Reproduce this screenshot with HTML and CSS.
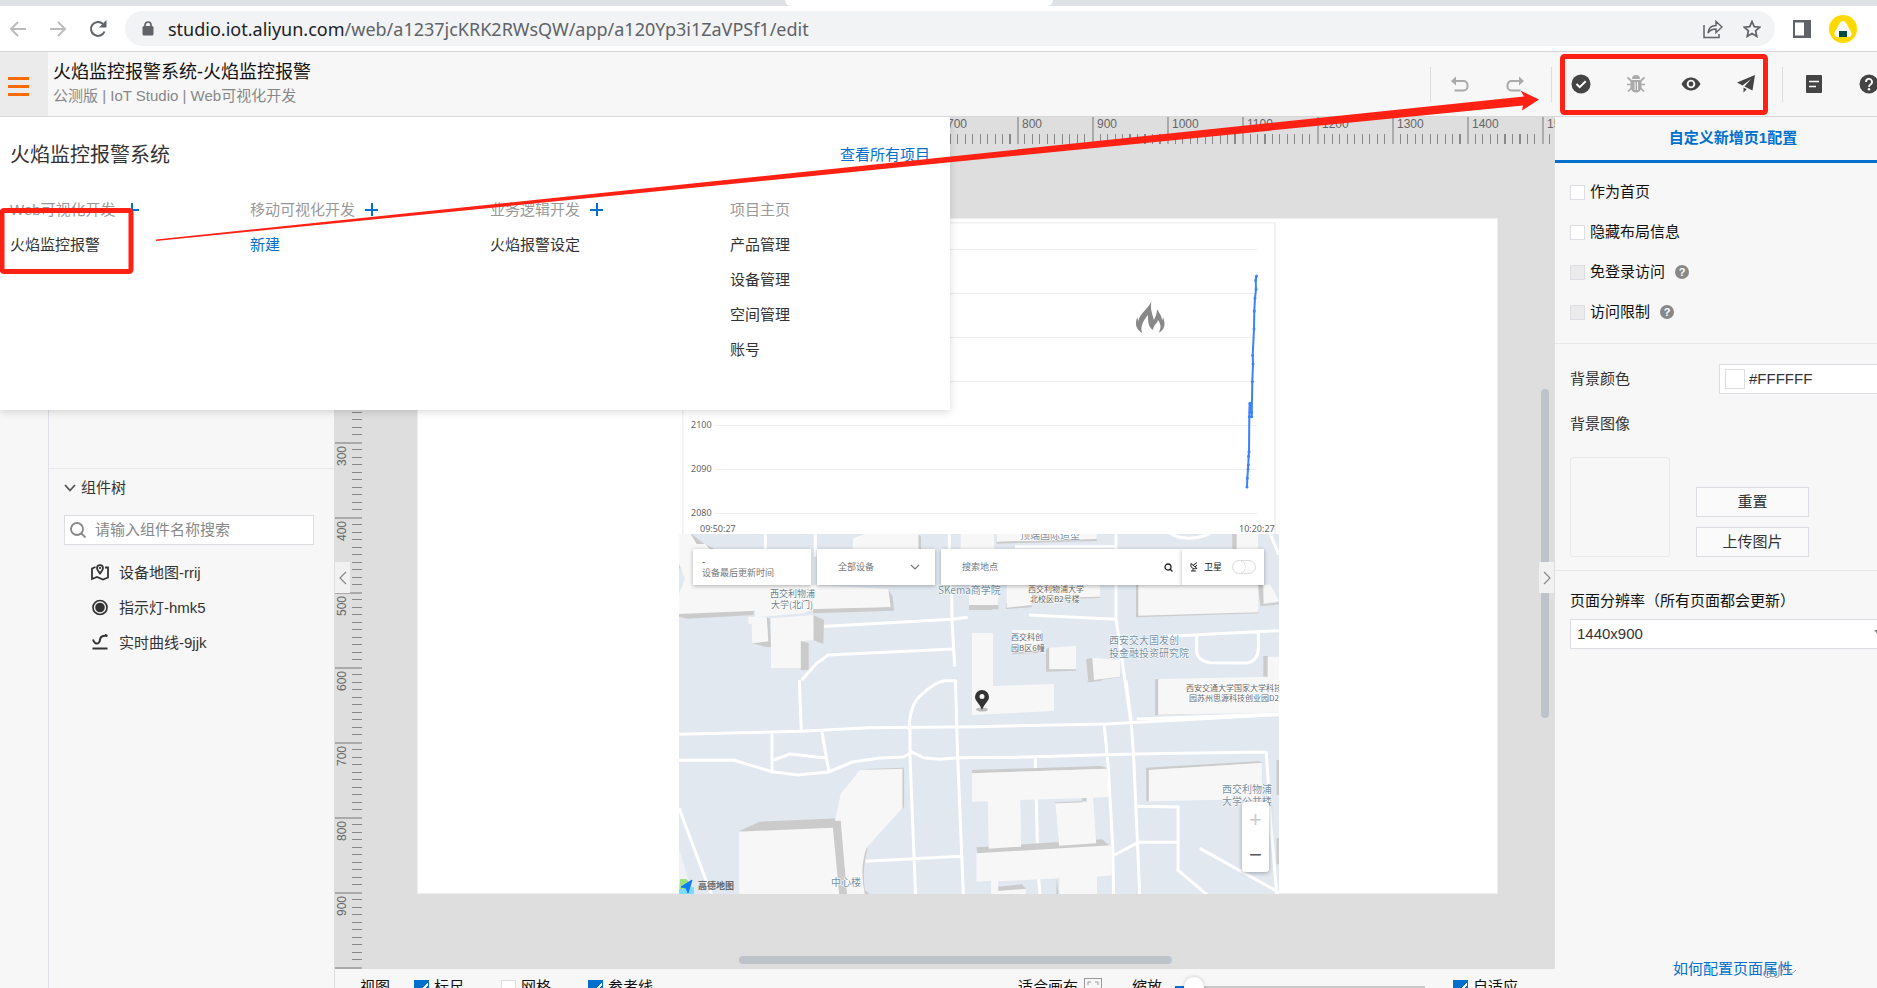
FILE: index.html
```
<!DOCTYPE html>
<html lang="zh-CN">
<head>
<meta charset="utf-8">
<title>火焰监控报警系统-火焰监控报警</title>
<link rel="stylesheet" href="styles.css">
</head>
<body>
<div class="tabstrip"><span class="tab-edge"></span></div>
<div class="browser">
  <button class="nav" aria-label="后退"><svg width="18" height="18" viewBox="0 0 18 18"><path d="M17 9H2M9 2 2 9l7 7" fill="none" stroke="#babcbe" stroke-width="2"/></svg></button>
  <button class="nav" aria-label="前进"><svg width="18" height="18" viewBox="0 0 18 18"><path d="M1 9h15M9 2l7 7-7 7" fill="none" stroke="#babcbe" stroke-width="2"/></svg></button>
  <button class="nav" aria-label="刷新"><svg width="18" height="18" viewBox="0 0 18 18"><path d="M15.500 11.500A7 7 0 1 1 14 4" fill="none" stroke="#5f6368" stroke-width="2"/><path d="M17.500 0v7.500H10z" fill="#5f6368"/></svg></button>
  <div class="address">
    <svg width="12" height="15" viewBox="0 0 12 15"><rect x="0.500" y="5" width="11" height="9.500" rx="1.500" fill="#5f6368"/><path d="M3 6V4a3 3 0 0 1 6 0v2" fill="none" stroke="#5f6368" stroke-width="1.700"/></svg>
    <div class="url" role="textbox" aria-label="地址">studio.iot.aliyun.com<span>/web/a1237jcKRK2RWsQW/app/a120Yp3i1ZaVPSf1/edit</span></div>
    <button class="tool" aria-label="分享"><svg width="20" height="20" viewBox="0 0 20 20" fill="none" stroke="#5f6368" stroke-width="1.500"><path d="M1 6v12.500h15V15"/><path d="M5 14c.5-5 3-7.500 8-7.500V2.500L19 8l-6 5.500V10c-4 0-6 1-8 4z"/></svg></button>
    <button class="tool" aria-label="收藏"><svg width="18" height="18" viewBox="0 0 18 18"><path d="M9 1.500l2.200 5.200 5.600.5-4.200 3.700 1.200 5.500L9 13.500l-4.800 2.900 1.200-5.500L1.200 7.200l5.600-.5z" fill="none" stroke="#5f6368" stroke-width="1.700"/></svg></button>
  </div>
  <button class="side" aria-label="侧边栏"><svg width="18" height="18" viewBox="0 0 18 18"><rect width="18" height="18" fill="#5f6368"/><rect x="2" y="2.500" width="9" height="13" fill="#fff"/></svg></button>
  <button class="avatar" aria-label="账户"><svg width="28" height="28" viewBox="0 0 28 28"><circle cx="14" cy="14" r="14" fill="#ffd900"/><path d="M14 6c2.500 0 3.600 2.600 5 5.500 1.600 3.300 3.500 5.200 3.500 7.500 0 2-1.500 3-3 3h-11c-1.500 0-3-1-3-3 0-2.300 1.900-4.200 3.500-7.500C10.400 8.600 11.500 6 14 6z" fill="#fff"/><rect x="10" y="16" width="8" height="6" fill="#004d40"/></svg></button>
</div>

<header class="header">
  <button class="burger" aria-label="菜单"><i></i><i></i><i></i></button>
  <div class="titles"><h1>火焰监控报警系统-火焰监控报警</h1><p>公测版 | IoT Studio | Web可视化开发</p></div>
  <div class="actions">
    <i class="rule"></i>
    <div class="group">
      <button aria-label="撤销"><svg width="18" height="17" viewBox="0 0 18 17"><path d="M4 5h8.500a4 4 0 0 1 4 4v1.500a4 4 0 0 1-4 4H3.500" fill="none" stroke="#aaa" stroke-width="2"/><path d="M0 5l5-4.500v9z" fill="#aaa"/></svg></button>
      <button aria-label="重做"><svg width="18" height="17" viewBox="0 0 18 17"><path d="M14 5H5.500a4 4 0 0 0-4 4v1.500a4 4 0 0 0 4 4h9" fill="none" stroke="#aaa" stroke-width="2"/><path d="M18 5l-5-4.500v9z" fill="#aaa"/></svg></button>
    </div>
    <i class="rule"></i>
    <div class="group">
      <button aria-label="保存"><svg width="20" height="20" viewBox="0 0 20 20"><circle cx="10" cy="10" r="9.500" fill="#444"/><path d="M5.500 10l3.200 3.200 6-6" fill="none" stroke="#fff" stroke-width="2"/></svg></button>
      <button aria-label="调试"><svg width="20" height="20" viewBox="0 0 20 20" fill="#aaa"><path d="M6 5a4 4 0 0 1 8 0z"/><path d="M4.500 6h11v7a5.500 5.500 0 0 1-11 0z"/><path d="M1.500 3.500L5.500 7M18.500 3.500L14.500 7M1 10.500h4M19 10.500h-4M2 17.500L5.500 14M18 17.500L14.500 14" stroke="#aaa" stroke-width="1.700"/><path d="M9 8v8M11.500 8v8" stroke="#f7f7f7"/></svg></button>
      <button aria-label="预览"><svg width="20" height="20" viewBox="0 0 20 20"><path d="M.5 10C3 5.500 6.500 3.500 10 3.500s7 2 9.500 6.500c-2.500 4.500-6 6.500-9.500 6.500S3 14.500.5 10z" fill="#444"/><circle cx="10" cy="10" r="4.300" fill="#f7f7f7"/><circle cx="10" cy="10" r="2.400" fill="#444"/></svg></button>
      <button aria-label="发布"><svg width="20" height="20" viewBox="0 0 20 20" fill="#444"><path d="M19 1L1 8.500l5.500 3L15 5l-6.500 7.500 8 4z"/><path d="M7.500 13.500v5l3.200-3.300z"/></svg></button>
    </div>
    <i class="rule"></i>
    <div class="group">
      <button aria-label="文档"><svg width="16" height="18" viewBox="0 0 16 18"><rect width="16" height="18" rx="1" fill="#444"/><path d="M3 6.500h10M3 11.500h7" stroke="#fff" stroke-width="1.700"/></svg></button>
      <button aria-label="帮助"><svg width="20" height="20" viewBox="0 0 20 20"><circle cx="10" cy="10" r="9.500" fill="#444"/><path d="M7 8a3 3 0 1 1 4.500 2.500C10.300 11.200 10 11.700 10 13" fill="none" stroke="#fff" stroke-width="1.800"/><circle cx="10" cy="15.300" r="1.200" fill="#fff"/></svg></button>
    </div>
  </div>
</header>

<main class="main">
  <div class="rail"></div>
  <aside class="left">
    <div class="library"></div>
    <section class="tree">
      <h2><svg width="12" height="8" viewBox="0 0 12 8"><path d="M1 1l5 5.500L11 1" fill="none" stroke="#555" stroke-width="1.800"/></svg>组件树</h2>
      <label class="search"><svg width="16" height="16" viewBox="0 0 16 16"><circle cx="7" cy="7" r="6" fill="none" stroke="#888" stroke-width="1.800"/><path d="M11 11l4.500 4.500" stroke="#888" stroke-width="1.800"/></svg><input type="text" placeholder="请输入组件名称搜索" aria-label="搜索组件"></label>
      <ul>
        <li><svg width="18" height="17" viewBox="0 0 18 17" fill="none" stroke="#333" stroke-width="1.800"><path d="M4.500 3L1 4.500V15l5-2 6 2.500 5-2V3.500h-3"/><path d="M9 9.500C7 7 6 6 6 4.200a3 3 0 0 1 6 0C12 6 11 7 9 9.500z"/><path d="M9 3v2"/></svg>设备地图-rrij</li>
        <li><svg width="18" height="17" viewBox="0 0 18 17"><circle cx="9" cy="8.500" r="7" fill="none" stroke="#333" stroke-width="1.700"/><circle cx="9" cy="8.500" r="4.800" fill="#333"/></svg>指示灯-hmk5</li>
        <li><svg width="18" height="17" viewBox="0 0 18 17" fill="none" stroke="#333" stroke-width="2"><path d="M1.500 14.500h15"/><path d="M2 5.500c1 3.500 3.500 5 5.500 3.500s1-3 2-5 3-2.500 6.500-2M14 1l2.500 1"/></svg>实时曲线-9jjk</li>
      </ul>
    </section>
  </aside>

  <section class="work">
    <div class="stage">
      <div class="ruler-x"><b>-100</b><b>0</b><b>100</b><b>200</b><b>300</b><b>400</b><b>500</b><b>600</b><b>700</b><b>800</b><b>900</b><b>1000</b><b>1100</b><b>1200</b><b>1300</b><b>1400</b><b>1500</b></div>
      <div class="ruler-y"><b>-100</b><b>0</b><b>100</b><b>200</b><b>300</b><b>400</b><b>500</b><b>600</b><b>700</b><b>800</b><b>900</b><b></b></div>
      <div class="artboard">
        <svg class="chart" width="594" height="312" viewBox="682 222 594 312">
          <path d="M682.500 534V222.500H1275V534" fill="none" stroke="#f2f2f2" stroke-width="2"/>
          <path d="M715 249.500h542M715 293.500h542M715 337.500h542M715 381.500h542M715 425.500h542M715 469.500h542M715 513.500h542" stroke="#ededed"/>
          <g class="axis"><text x="691" y="428">2100</text><text x="691" y="472">2090</text><text x="691" y="516">2080</text><text x="700" y="532">09:50:27</text><text x="1239" y="532">10:20:27</text></g>
          <polyline class="series" points="1247,487 1247.300,478.300 1248,469.300 1248.300,465 1248.600,456.300 1249,451.700 1249.300,416.700 1249.600,403.300 1251.700,412.300 1251.700,416.700 1252.300,381.700 1253,364 1252.700,355.300 1254,328.700 1254.300,311 1255,298 1256,289.300 1255.700,280.300 1256.500,276"/>
          <path class="dots" d="M1247 487h0M1247.300 478.300h0M1248 469.300h0M1248.300 465h0M1248.600 456.300h0M1249 451.700h0M1249.300 416.700h0M1250 403.300h0M1250 412.300h0M1251.700 412.300h0M1251.700 416.700h0M1252.300 381.700h0M1253 364h0M1252.700 355.300h0M1254 328.700h0M1254.300 311h0M1255 298h0M1256 289.300h0M1255.700 280.300h0M1256.500 276h0"/>
          <path fill="#888" d="M1151.500 301c-1 5-13 14-13 20-1-2-1-3-1-4-1.500 3-1.500 5-1.500 7 0 4 3 7 6 9-1.500-6 0-11 6-18 0 6 0 12 5 15 1-6 4-6 5-10 3 4 3.500 8 .5 13 4-2 6-5 6-9 0-2-.5-4-1.500-7 0 1 0 2-1 3 0-4-3-7-5-11 0 6-2 8-3 11-2-7-4-11-2.500-19z"/>
        </svg>
        <svg class="map" width="600" height="360" viewBox="679 534 600 360">
          <rect x="679" y="534" width="600" height="360" fill="#e1e8f0"/>
          <g transform="translate(670 400) scale(.33333)">
            <g class="road"><path d="M286 400v60M436 400v70M838 400v100l7 80 1 80 8 140M430 681l416-23 47-6M395 840l45-50 35-25 375-18M42 560l20-60"/></g>
            <g class="side"><path d="M27 640l224-8v13l-200 11-24-6zM65 402l35 28 33 17-100 0zM655 568l13 22 4 42-242 8v-14l230-5zM745 402l8 8v40h-8zM430 645l32 15-2 72-30-12zM392 722l24 8v80h-24zM290 652l9 3 4 86h-15l-41-11 47-6zM897 600h70v30h-70zM27 470l24 5v36l-24-6z"/></g>
            <g class="block"><path d="M27 402h35l18 30h25l20 20h302v175l-27 13-145 12v-20l-228 10v-60l18-45-18-45zM425 555l230 12 7 54-232 6zM549 415l36-13h160v45H549zM872 402h100v45H872zM897 555h75v60h-75zM303 655l127-10v75l-38 4v80h-89zM235 650l55 2 5 72-48 6-2-58h-10z"/></g>
          </g>
          <g transform="translate(980 500) scale(.33333)">
            <g class="road"><path d="M408 100v255l44 305M147 345l261 13M105 140l303-1M570 100q55 30 120 0M560 409l337-17M650 408v50q5 25 40 30l110 1q35-5 35-45v-45M870 100l27 65M470 657l427-15"/></g>
            <g class="side"><path d="M50 110h300v13l-200 5-100 3zM0 300h55v28H0zM78 310l77-2v14l-77 5zM175 280h185v14l-185 5zM468 255h10v85l358-10v10l-368 12zM835 255h15v58l47-6v6l-55 6-9-60zM757 102h14v45h-14zM96 450l88-5v13l-88 5zM198 448l10-6v66h80v4l-90 3zM318 478l20-5 5 60 78-10v8l-96 14zM850 468h14v62h-14zM526 537h10v100l361-10v8l-371 11z"/></g>
            <g class="block"><path d="M50 102h300v15l-300 8zM0 255h55v60H0zM80 255h75v60l-75 8zM175 255h185v35l-185 4zM475 255h360v82l-360 10zM850 255h22l25 48-45 7zM770 102h64v45h-64zM96 390h88v60l-88 8zM208 443l80-6v70h-80zM337 473l83 7v50l-78 10zM863 470h40v60h-40zM535 537l362-7v105l-362 8z"/></g>
          </g>
          <path class="block" d="M972 633h21v53l61-2v27l-82 4z"/>
          <g transform="translate(670 680) scale(.3954 .33333)">
            <g class="road"><path d="M23 163l310-9 170-11 270-3 330-8 437-28M327 0l5 152M258 157v118M384 155l18 120M258 242l45-20 92 12M23 241h140l95 34 65 10 78-9 60-30 70-12 60-3 20-15 30 17 40 5 50-5 140-1 300-10 335-6M605 150q0-75 30-105 35-40 60-43h28M722 0l5 215 15 430M607 150v80l14 415M495 544l240-15M924 235l5 255M932 590l4 55M1098 135l10 120 12 250 2 145M1153 0l13 120 7 120 15 405M1124 525l60-38h103M1182 379l103 2v190l75 75M1508 214l12 230 15 200M1340 505l200 132M23 385l82 260"/></g>
            <path d="M23 505l35 140H23z" fill="#f1f2f5"/>
            <g class="side"><path d="M480 268l112-5v118l-5 6-8-115zM175 453l52-28 205-10v32l-235 10zM410 442l22-20 16 223h-22zM500 505q-15 60-7 125l20 20h-25q-12-80 5-150zM764 270l326-12 18 8-344 14zM974 367l80-4v-10h-12v25l-58 3 6 110-6 5zM775 502l318-24 20 20-335 24zM830 620l60-7 10 14-70 6zM978 597l5 48h-6zM1204 263l285-19 10 4-287 22v92l-7 2zM1228 0h7v104h-7zM1534 240h7v105h-7zM1534 475h7v78h-7zM1056 3l35-3v3l-35 4z"/></g>
            <g class="block"><path d="M480 270l108-4v118l-90 118q-20 60-5 142h-45l-16-222h-15l15-80zM175 455l237-12 16 202H175zM764 280l344-14v85l-38 2 8 137-94 7-10-127 80-3v-13l-168 6 2 140-82 6-2-142-40 1zM775 520l342-24v90l-37 4v55h-95v-50l-155 9v41h-18v-43l-37 3zM830 633l70-6v18h-70zM1211 270l286-21v108l-286 7zM1235 0h310v98l-310 6z"/></g>
          </g>
          <ellipse cx="982" cy="709.500" rx="6" ry="2" fill="#bbb"/>
          <path fill="#333" fill-rule="evenodd" d="M982 710c-2-6-7-9-7-13a7 7 0 0 1 14 0c0 4-5 7-7 13zM982 694a2.500 2.500 0 1 0 0 5 2.500 2.500 0 0 0 0-5z"/>
          <g class="place">
            <text x="770" y="597">西交利物浦</text><text x="771" y="608">大学(北门)</text>
            <text class="big" x="1020" y="539">顶端国际造型</text>
            <text class="big" x="938" y="594">SKema商学院</text>
            <text class="small" x="1028" y="592">西交利物浦大学</text><text class="small" x="1030" y="602">北校区B2号楼</text>
            <text class="small" x="1011" y="640">西交科创</text><text class="small" x="1011" y="651">园B区6幢</text>
            <text class="big" x="1109" y="644">西安交大国发创</text><text class="big" x="1109" y="657">投金融投资研究院</text>
            <text class="small" x="1186" y="691">西安交通大学国家大学科技</text><text class="small" x="1189" y="701">园苏州思源科技创业园D2</text>
            <text class="big" x="1222" y="793">西交利物浦</text><text class="big" x="1222" y="805">大学公共楼</text>
            <text class="big" x="831" y="886">中心楼</text>
          </g>
          <path d="M680 879h6q6 4 7 15h-14z" fill="#9be27d"/><path d="M679 890l15-3v7h-15z" fill="#7edbff"/><path d="M692 880l-11 7 5 1 2 5z" fill="#0a7cff" stroke="#0a7cff"/>
          <text class="brand" x="698" y="889">高德地图</text>
        </svg>
        <div class="mapbar">
          <div class="card updated"><span>-</span><span>设备最后更新时间</span></div>
          <button class="card devices">全部设备<svg width="10" height="6" viewBox="0 0 10 6"><path d="M1 1l4 4 4-4" fill="none" stroke="#777" stroke-width="1.200"/></svg></button>
          <div class="card finder"><input type="text" placeholder="搜索地点" aria-label="搜索地点"><svg width="9" height="9" viewBox="0 0 9 9"><circle cx="4" cy="4" r="3" fill="none" stroke="#222" stroke-width="1.300"/><path d="M6 6l2.500 2.500" stroke="#222" stroke-width="1.300"/></svg></div>
          <label class="card satellite"><svg width="8" height="10" viewBox="0 0 8 10" fill="none" stroke="#222"><path d="M1 1.500c-1 4 2 6 6 5zM3 3.500L7 .5M5 5l2-2M3 7v2M1 9h5"/></svg>卫星<input type="checkbox" class="switch"></label>
        </div>
        <div class="zoom"><button aria-label="放大" class="plus">+</button><i></i><button aria-label="缩小">−</button></div>
      </div>
      <i class="scroll-y"></i><i class="scroll-x"></i>
      <button class="fold fold-l" aria-label="收起左栏"><svg width="8" height="14" viewBox="0 0 8 14"><path d="M7 1L1 7l6 6" fill="none" stroke="#888" stroke-width="1.200"/></svg></button>
      <button class="fold fold-r" aria-label="收起右栏"><svg width="8" height="14" viewBox="0 0 8 14"><path d="M1 1l6 6-6 6" fill="none" stroke="#888" stroke-width="1.200"/></svg></button>
    </div>
    <footer class="viewbar">
      <span class="cap">视图</span>
      <label><input type="checkbox" checked>标尺</label>
      <label><input type="checkbox">网格</label>
      <label><input type="checkbox" checked>参考线</label>
      <button class="fit">适合画布<svg width="18" height="18" viewBox="0 0 18 18" fill="none" stroke="#999"><rect x=".5" y=".5" width="17" height="17"/><path d="M4 7V4h3M11 4h3v3M14 11v3h-3M7 14H4v-3"/></svg></button>
      <label class="scale">缩放<input type="range" min="0" max="100" value="4"></label>
      <label class="auto"><input type="checkbox" checked>自适应</label>
    </footer>
  </section>

  <aside class="right">
    <button class="tab">自定义新增页1配置</button>
    <div class="sect checks">
      <label><input type="checkbox">作为首页</label>
      <label><input type="checkbox">隐藏布局信息</label>
      <label><input type="checkbox" disabled>免登录访问<span class="help">?</span></label>
      <label><input type="checkbox" disabled>访问限制<span class="help">?</span></label>
    </div>
    <div class="sect back">
      <div class="row"><label for="bg">背景颜色</label><div class="color"><i></i><input id="bg" type="text" value="#FFFFFF"></div></div>
      <div class="row"><span>背景图像</span></div>
      <div class="image"><div class="thumb"></div><div class="btns"><button>重置</button><button>上传图片</button></div></div>
    </div>
    <div class="sect size">
      <label for="res">页面分辨率（所有页面都会更新）</label>
      <div class="pick"><select id="res"><option>1440x900</option></select><svg width="10" height="6" viewBox="0 0 10 6"><path d="M0 0h10L5 6z" fill="#888"/></svg></div>
    </div>
    <div class="foot"><a href="#">如何配置页面属性</a><svg class="mark" width="36" height="16" viewBox="0 0 36 16" fill="none" stroke="#8d9299"><path d="M9 9a4 4 0 1 0 0 5M12 9a3 3 0 1 0 1 5M17 5v8c0 2-2 3-4 2M19 13c2-9 7-10 8-5s3 4 7 0M22 5l6 6"/></svg></div>
  </aside>

  <nav class="menu">
    <div class="menu-head"><h2>火焰监控报警系统</h2><a href="#">查看所有项目</a></div>
    <div class="cols">
      <div><h3>Web可视化开发<button aria-label="新建Web应用" class="add"></button></h3><a href="#">火焰监控报警</a></div>
      <div><h3>移动可视化开发<button aria-label="新建移动应用" class="add"></button></h3><a href="#" class="new">新建</a></div>
      <div><h3>业务逻辑开发<button aria-label="新建业务逻辑" class="add"></button></h3><a href="#">火焰报警设定</a></div>
      <div><h3>项目主页</h3><a href="#">产品管理</a><a href="#">设备管理</a><a href="#">空间管理</a><a href="#">账号</a></div>
    </div>
  </nav>
</main>

<svg class="notes" width="1877" height="300" viewBox="0 0 1877 300">
  <rect x="2" y="210.500" width="129" height="61" rx="2" fill="none" stroke="#ff2113" stroke-width="5"/>
  <rect x="1562.500" y="56.500" width="203" height="56" rx="2" fill="none" stroke="#ff2113" stroke-width="5"/>
  <path d="M156 239.500L1524 96.500 1520.500 90.500 1539 99.500 1522 110.500 1523 105.500 156 241z" fill="#ff2113"/>
</svg>
</body>
</html>
```

FILE: styles.css
```
* { box-sizing: border-box; }
body {
  margin: 0;
  height: 100vh;
  display: flex;
  flex-direction: column;
  overflow: hidden;
  position: relative;
  font: 15px/20px "Liberation Sans", "Noto Sans CJK SC", sans-serif;
  color: #333;
  background: #f7f7f7;
}
button, input, select { font: inherit; color: inherit; }
button { border: 0; padding: 0; margin: 0; background: none; display: flex; align-items: center; justify-content: center; }
h1, h2, h3, p, ul { margin: 0; padding: 0; font-weight: 400; list-style: none; }
a { color: #0070cc; text-decoration: none; }
svg { flex: none; display: block; }

/* browser chrome */
.tabstrip { height: 6px; background: #dee1e6; flex: none; display: flex; padding-left: 785px; }
.tab-edge { width: 268px; background: #fff; border-radius: 0 0 6px 6px; }
.browser { height: 46px; flex: none; background: #fff; border-bottom: 1px solid #d5d5d5; display: flex; align-items: center; padding: 0 20px 0 0; }
.nav { width: 35px; height: 36px; flex: none; }
.nav:nth-child(2) { width: 45px; }
.address { flex: 1; min-width: 0; height: 35px; margin-left: 10px; border-radius: 18px; background: #f1f3f4; display: flex; align-items: center; padding: 0 14px 0 17px; }
.url { flex: 1; min-width: 0; margin-left: 14px; font: 18px/26px "Noto Sans", sans-serif; color: #202124; white-space: nowrap; overflow: hidden; }
.url span { color: #5f6368; }
.tool { width: 40px; height: 30px; }
.tool:last-child { width: 18px; margin-left: 10px; }
.side { margin-left: 18px; }
.avatar { margin-left: 18px; }

/* app header */
.header { height: 65px; flex: none; display: flex; border-bottom: 1px solid #d8d8d8; background: #f7f7f7; overflow: hidden; }
.burger { width: 48px; flex: none; background: #ebebeb; flex-direction: column; gap: 5px; padding: 4px 11px 0 0; }
.burger i { width: 21px; height: 3px; background: #ff6a00; }
.titles { padding: 7px 0 0 5px; flex: 1; white-space: nowrap; }
.titles h1 { font-size: 18px; line-height: 26px; color: #111; }
.titles p { line-height: 22px; color: #888; }
.actions { display: flex; align-items: center; gap: 3px; margin-right: -19px; }
.actions .rule { width: 1px; height: 35px; background: #ddd; }
.actions .rule + .group { margin: 0 6px 0 -2px; }
.actions .group:last-child { margin: 0; }
.group { display: flex; }
.group button { width: 55px; height: 36px; }

/* frame */
.main { flex: 1; min-height: 0; display: flex; overflow: hidden; position: relative; }
.rail { width: 49px; flex: none; border-right: 1px solid #dde1e6; }
.left { width: 285px; flex: none; display: flex; flex-direction: column; }
.library { height: 352px; border-bottom: 1px solid #e6e8eb; }
.tree { padding: 8px 20px 0 15px; }
.tree h2 { display: flex; align-items: center; gap: 5px; font-size: 15px; line-height: 22px; }
.search { display: flex; align-items: center; gap: 9px; height: 30px; margin: 16px 0 10px; padding: 0 5px; border: 1px solid #dcdee3; background: #fff; }
.search input { border: 0; outline: 0; padding: 0; flex: 1; min-width: 0; background: none; }
.search input::placeholder { color: #888; opacity: 1; }
.tree li { display: flex; align-items: center; gap: 10px; height: 35px; padding-left: 27px; }

/* canvas */
.work { flex: 1; min-width: 0; display: flex; flex-direction: column; }
.stage { flex: 1; min-height: 0; position: relative; overflow: hidden; background: #dedede; }
.ruler-x, .ruler-y { position: absolute; top: 0; left: 0; display: flex; font-size: 12px; line-height: 15px; color: #666; }
.ruler-x { padding-left: 8px; height: 28px; }
.ruler-x b { flex: none; width: 75px; height: 27px; padding-left: 3px; font-weight: 400; border-left: 2px solid #aaa; background: repeating-linear-gradient(90deg, #888 0 1px, transparent 1px 10%) border-box 0 17px no-repeat; }
.ruler-y { flex-direction: column; width: 28px; padding-top: 25px; }
.ruler-y b { flex: none; height: 75px; width: 27px; margin-left: 1px; padding-bottom: 2px; font-weight: 400; writing-mode: vertical-rl; transform: rotate(180deg); text-align: right; border-bottom: 2px solid #aaa; background: linear-gradient(#dedede, #dedede) 10px 0 / 17px 73px no-repeat, repeating-linear-gradient(0deg, #888 0 1px, transparent 1px 10%) border-box; }
.artboard { position: absolute; left: 83px; top: 101px; width: 1081px; height: 676px; background: #fff; border: 1px solid #eee; }
.chart { position: absolute; left: 264px; top: 3px; }
.map { position: absolute; left: 261px; top: 315px; }
.axis text { font: 9px "Noto Sans", sans-serif; fill: #666; }
.series { fill: none; stroke: #3b82ff; stroke-width: 2; stroke-linejoin: round; }
.dots { stroke: #3b82ff; stroke-width: 3; stroke-linecap: round; }
.road path { fill: none; stroke: #fff; stroke-width: 3; vector-effect: non-scaling-stroke; }
.side path { fill: #cbcbcb; }
.block path, path.block { fill: #f7f7f7; }
.place text { font: 9px "Noto Sans CJK SC", sans-serif; fill: #6b7f8e; paint-order: stroke; stroke: #fff; stroke-width: 1; }
.place .big { font-size: 10px; fill: #7890a3; }
.place .small { font-size: 8px; fill: #666; }
.brand { font: bold 9px "Noto Sans CJK SC", sans-serif; fill: #666; }
.mapbar { position: absolute; left: 275px; top: 330px; width: 571px; display: flex; font: 9px/12px "Noto Sans CJK SC", sans-serif; color: #777; }
.card { height: 36px; background: #fff; box-shadow: 0 1px 4px rgba(0, 0, 0, .3); display: flex; align-items: center; }
.updated { width: 118px; margin-right: 6px; padding: 2px 9px 0; flex-direction: column; align-items: flex-start; justify-content: center; }
.updated span:first-child { line-height: 10px; color: #222; }
.devices { width: 118px; margin-right: 6px; padding: 0 15px 0 21px; justify-content: space-between; }
.finder { flex: 1; padding: 0 9px 0 21px; }
.finder input { flex: 1; min-width: 0; border: 0; padding: 0; background: none; }
.finder input::placeholder { color: #777; }
.satellite { width: 82px; padding-left: 8px; gap: 6px; color: #222; }
.switch { appearance: none; margin: 0 0 0 4px; width: 24px; height: 14px; border: 1px solid #ddd; border-radius: 7px; background: radial-gradient(circle at 6px 6px, #fff 6px, #ddd 6px, #fafafa 7px); }
.zoom { position: absolute; left: 824px; top: 583px; width: 27px; height: 70px; background: #fff; border-radius: 3px; box-shadow: 0 1px 4px rgba(0, 0, 0, .3); display: flex; flex-direction: column; align-items: center; }
.zoom button { height: 35px; width: 27px; font: 22px/35px "Liberation Sans", sans-serif; color: #555; }
.zoom .plus { color: #ccc; }
.zoom i { width: 16px; height: 1px; background: #ddd; }
.scroll-y, .scroll-x { position: absolute; background: #bcc3cb; border-radius: 4px; }
.scroll-y { right: 6px; top: 272px; width: 8px; height: 329px; }
.scroll-x { left: 405px; bottom: 5px; width: 433px; height: 8px; }
.fold { position: absolute; top: 445px; width: 15px; height: 31px; background: #f1f1f1; }
.fold-l { left: 1px; }
.fold-r { right: 1px; }

/* bottom bar */
.viewbar { flex: none; height: 36px; margin-bottom: -17px; padding: 0 37px 0 25px; display: flex; align-items: center; background: #f7f7f7; color: #111; border-left: 1px solid #ddd; white-space: nowrap; }
.viewbar label { display: flex; align-items: center; margin-right: 37px; gap: 5px; }
.viewbar .cap { margin-right: 24px; }
.viewbar .fit { margin-left: auto; gap: 6px; }
.viewbar .scale { margin: 0 0 0 30px; gap: 13px; }
.viewbar .auto { margin: 0 0 0 28px; }
input[type=checkbox]:not(.switch) { appearance: none; margin: 0; width: 15px; height: 15px; flex: none; border: 1px solid #dcdee3; background: #fff; }
input[type=checkbox]:not(.switch):checked { border-color: #0070cc; background: linear-gradient(-45deg, transparent 6px, #fff 6px 8px, transparent 8px) 3px -1px / 12px 12px no-repeat, #0070cc; clip-path: inset(0); }
input[type=checkbox]:not(.switch):disabled { background: #ebebeb; }
input[type=range] { appearance: none; margin: 0; width: 250px; height: 20px; background: linear-gradient(90deg, #0070cc 10px, #c8c8c8 10px) center / 100% 3px no-repeat; }
input[type=range]::-webkit-slider-thumb { appearance: none; width: 20px; height: 20px; border-radius: 50%; background: #fff; box-shadow: 0 0 4px rgba(0, 0, 0, .2); }

/* property panel */
.right { width: 356px; flex: none; margin-right: -34px; display: flex; flex-direction: column; background: #f7f7f7; }
.tab { flex: none; height: 46px; padding-bottom: 2px; border-bottom: 3px solid #0070cc; font-weight: 700; color: #0070cc; }
.sect { border-bottom: 1px solid #e8e8e8; padding: 0 15px; }
.checks { padding-top: 9px; padding-bottom: 11px; }
.checks label { display: flex; align-items: center; gap: 5px; height: 40px; color: #111; }
.help { width: 14px; height: 14px; margin-left: 5px; border-radius: 50%; background: #888; color: #fff; font: bold 11px/14px "Liberation Sans", sans-serif; text-align: center; }
.back { padding-top: 20px; padding-bottom: 13px; }
.row { display: flex; align-items: center; justify-content: space-between; height: 30px; margin-bottom: 15px; }
.color { display: flex; align-items: center; width: 177px; height: 30px; padding: 0 5px; gap: 4px; border: 1px solid #dcdee3; background: #fff; }
.color i { width: 20px; height: 20px; border: 1px solid #dcdee3; flex: none; }
.color input { border: 0; padding: 0; min-width: 0; flex: 1; background: none; }
.image { display: flex; align-items: flex-end; gap: 26px; }
.thumb { width: 100px; height: 100px; margin-top: 3px; border: 1px solid #e8e8e8; border-radius: 3px; }
.btns { display: flex; flex-direction: column; gap: 10px; }
.btns button { width: 113px; height: 30px; border: 1px solid #dcdee3; background: #fafafa; }
.size { border: 0; padding-top: 20px; }
.size label { display: block; color: #111; }
.pick { position: relative; margin-top: 8px; }
.pick select { appearance: none; width: 100%; height: 30px; padding: 0 6px; border: 1px solid #dcdee3; border-radius: 0; background: #fff; }
.pick svg { position: absolute; right: 12px; top: 11px; }
.foot { margin-top: auto; padding-bottom: 9px; display: flex; justify-content: center; position: relative; }
.mark { position: absolute; left: 207px; top: 3px; }

/* project menu */
.menu { position: absolute; left: 0; top: 0; width: 950px; height: 293px; padding: 0 10px; background: #fff; box-shadow: 0 2px 8px rgba(0, 0, 0, .15); clip-path: inset(0 -10px -10px 0); }
.menu-head { display: flex; align-items: center; justify-content: space-between; padding: 24px 10px 0 0; }
.menu-head h2 { font-size: 20px; line-height: 28px; }
.cols { display: grid; grid-template-columns: repeat(4, 240px); margin-top: 23px; }
.cols h3, .cols a { display: flex; align-items: center; height: 35px; font-size: 15px; color: #333; }
.cols h3 { color: #999; gap: 10px; }
.cols .new { color: #0070cc; }
.add { width: 13px; height: 13px; background: linear-gradient(#0070cc, #0070cc) center / 100% 2px no-repeat, linear-gradient(#0070cc, #0070cc) center / 2px 100% no-repeat; }
.notes { position: absolute; left: 0; top: 0; pointer-events: none; }
```
